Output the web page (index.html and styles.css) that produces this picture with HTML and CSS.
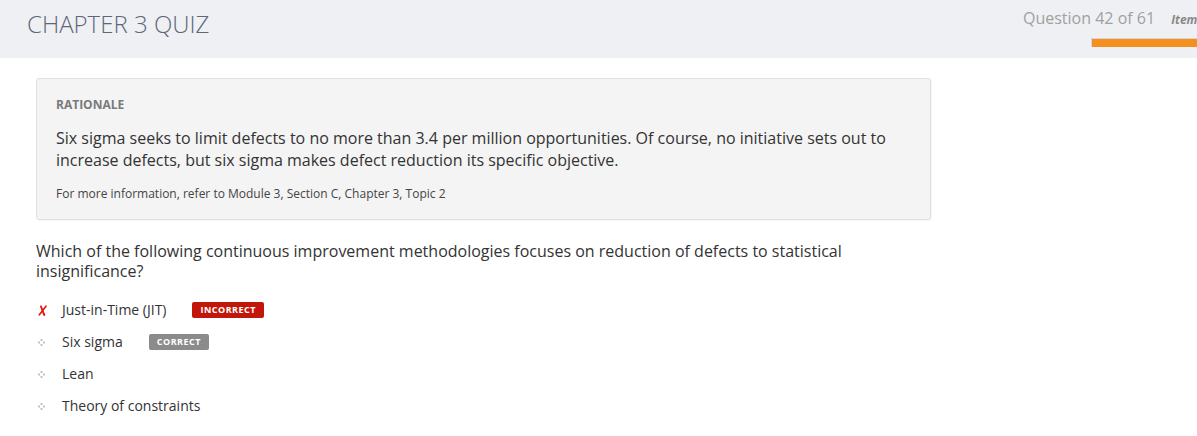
FILE: index.html
```html
<!DOCTYPE html>
<html>
<head>
<meta charset="utf-8">
<link rel="stylesheet" href="styles.css">
</head>
<body>
<header class="topbar">
  <h1 class="title">CHAPTER 3 QUIZ</h1>
  <div class="progress">
    <div class="progress-row">
      <span class="qcount">Question 42 of 61</span>
      <span class="item">Item</span>
    </div>
    <div class="bar"></div>
  </div>
</header>
<main class="content">
  <section class="rationale">
    <div class="rationale-label">RATIONALE</div>
    <p class="rationale-text">Six sigma seeks to limit defects to no more than 3.4 per million opportunities. Of course, no initiative sets out to increase defects, but six sigma makes defect reduction its specific objective.</p>
    <p class="rationale-ref">For more information, refer to Module 3, Section C, Chapter 3, Topic 2</p>
  </section>
  <p class="question">Which of the following continuous improvement methodologies focuses on reduction of defects to statistical insignificance?</p>
  <ul class="options">
    <li class="option">
      <span class="icon"><svg width="9" height="11" viewBox="0 0 9 11"><path d="M3 1.5 C4 4, 5 7, 6.3 10" stroke="#e8140c" stroke-width="1.9" fill="none" stroke-linecap="round"/><path d="M8 1.2 C6 3.8, 3.5 7, 1.3 9.8" stroke="#e8140c" stroke-width="1.6" fill="none" stroke-linecap="round"/></svg></span>
      <span class="label">Just-in-Time (JIT)</span>
      <span class="badge badge-incorrect">INCORRECT</span>
    </li>
    <li class="option">
      <span class="icon"><svg width="7" height="7" viewBox="0 0 7 7"><rect x="2.5" y="0" width="2" height="2" fill="#c4c4c4"/><rect x="0" y="2.5" width="2" height="2" fill="#c4c4c4"/><rect x="5" y="2.5" width="2" height="2" fill="#c4c4c4"/><rect x="2.5" y="5" width="2" height="2" fill="#c4c4c4"/></svg></span>
      <span class="label">Six sigma</span>
      <span class="badge badge-correct">CORRECT</span>
    </li>
    <li class="option">
      <span class="icon"><svg width="7" height="7" viewBox="0 0 7 7"><rect x="2.5" y="0" width="2" height="2" fill="#c4c4c4"/><rect x="0" y="2.5" width="2" height="2" fill="#c4c4c4"/><rect x="5" y="2.5" width="2" height="2" fill="#c4c4c4"/><rect x="2.5" y="5" width="2" height="2" fill="#c4c4c4"/></svg></span>
      <span class="label">Lean</span>
    </li>
    <li class="option">
      <span class="icon"><svg width="7" height="7" viewBox="0 0 7 7"><rect x="2.5" y="0" width="2" height="2" fill="#c4c4c4"/><rect x="0" y="2.5" width="2" height="2" fill="#c4c4c4"/><rect x="5" y="2.5" width="2" height="2" fill="#c4c4c4"/><rect x="2.5" y="5" width="2" height="2" fill="#c4c4c4"/></svg></span>
      <span class="label">Theory of constraints</span>
    </li>
  </ul>
</main>
</body>
</html>
```
FILE: styles.css
```css
html, body {
  margin: 0;
  padding: 0;
  background: #ffffff;
  font-family: "Open Sans", "Liberation Sans", sans-serif;
  color: #333333;
  overflow: hidden;
}

.topbar {
  height: 58px;
  background: #eff0f4;
  display: flex;
  justify-content: space-between;
  overflow: hidden;
}

.title {
  margin: 0;
  padding: 11px 0 0 27px;
  font-size: 24px;
  line-height: 26px;
  font-weight: 300;
  color: #5c6778;
  letter-spacing: 0;
}

.progress {
  flex: none;
  width: 174px;
  padding-top: 8px;
  display: flex;
  flex-direction: column;
}

.progress-row {
  display: flex;
  align-items: baseline;
  white-space: nowrap;
  line-height: 20px;
}

.qcount {
  font-size: 16px;
  color: #a0a0a0;
}

.item {
  margin-left: 16px;
  font-size: 12px;
  font-weight: 700;
  font-style: italic;
  color: #8a8a8a;
}

.bar {
  margin-top: 8px;
  margin-left: 68px;
  width: 200px;
  height: 8px;
  background: #f39020;
  border-top: 1px solid #d6d6d6;
  border-left: 1px solid #d6d6d6;
}

.content {
  padding: 20px 0 0 36px;
  width: 895px;
}

.rationale {
  background: #f4f4f4;
  border: 1px solid #e0e0e0;
  border-radius: 3px;
  box-shadow: 1px 1px 1px rgba(0, 0, 0, 0.04);
  padding: 17px 19px 17px 19px;
}

.rationale-label {
  font-size: 12px;
  line-height: 17px;
  font-weight: 700;
  color: #7a7a7a;
}

.rationale-text {
  margin: 14px 0 0 0;
  font-size: 16px;
  line-height: 22px;
  color: #333333;
}

.rationale-ref {
  margin: 14px 0 0 0;
  font-size: 12px;
  line-height: 17px;
  color: #444444;
}

.question {
  margin: 21px 0 0 0;
  font-size: 16px;
  line-height: 20px;
  color: #333333;
}

.options {
  list-style: none;
  margin: 13px 0 0 0;
  padding: 0;
}

.option {
  height: 32px;
  display: flex;
  align-items: center;
  font-size: 14px;
  color: #333333;
}

.icon {
  width: 26px;
  display: flex;
  align-items: center;
  padding-left: 2px;
  box-sizing: border-box;
}

.label {
  line-height: 20px;
}

.badge {
  margin-left: 26px;
  height: 16px;
  padding: 0 8px;
  border-radius: 2px;
  font-size: 9px;
  line-height: 16px;
  font-weight: 700;
  letter-spacing: 0.5px;
  color: #ffffff;
}

.badge-incorrect {
  background: #c3160b;
}

.badge-correct {
  background: #8b8b8b;
}
```
